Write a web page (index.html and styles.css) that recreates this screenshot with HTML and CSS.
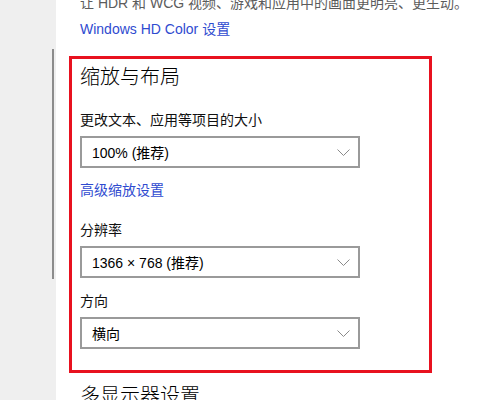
FILE: index.html
```html
<!DOCTYPE html>
<html lang="zh-CN">
<head>
<meta charset="utf-8">
<title>显示设置</title>
<link rel="stylesheet" href="styles.css">
</head>
<body>
<div class="page">
  <aside class="rail">
    <div class="scroll-thumb"></div>
  </aside>
  <main class="content">
    <p class="desc">让 HDR 和 WCG 视频、游戏和应用中的画面更明亮、更生动。</p>
    <a class="link top-link" href="#">Windows HD Color 设置</a>
    <section class="scale-box">
      <h2 class="heading">缩放与布局</h2>
      <div class="label first-label">更改文本、应用等项目的大小</div>
      <div class="select">
        <span>100% (推荐)</span>
        <svg class="chev" width="13" height="7" viewBox="0 0 13 7"><path d="M0.5 0.5 L6.5 6.5 L12.5 0.5" fill="none" stroke="#8a8a8a" stroke-width="1"/></svg>
      </div>
      <a class="link box-link" href="#">高级缩放设置</a>
      <div class="label">分辨率</div>
      <div class="select">
        <span>1366 × 768 (推荐)</span>
        <svg class="chev" width="13" height="7" viewBox="0 0 13 7"><path d="M0.5 0.5 L6.5 6.5 L12.5 0.5" fill="none" stroke="#8a8a8a" stroke-width="1"/></svg>
      </div>
      <div class="label after-select">方向</div>
      <div class="select">
        <span>横向</span>
        <svg class="chev" width="13" height="7" viewBox="0 0 13 7"><path d="M0.5 0.5 L6.5 6.5 L12.5 0.5" fill="none" stroke="#8a8a8a" stroke-width="1"/></svg>
      </div>
    </section>
    <h2 class="heading next-heading">多显示器设置</h2>
  </main>
</div>
</body>
</html>
```
FILE: styles.css
```css
html, body {
  margin: 0;
  padding: 0;
  background: #ffffff;
  overflow: hidden;
}
body {
  width: 500px;
  height: 400px;
  font-family: "Liberation Sans", "Noto Sans CJK SC", sans-serif;
  font-size: 14px;
  color: #000;
}
.page {
  display: flex;
  height: 400px;
}
.rail {
  width: 56px;
  flex: none;
  background: #efefef;
  display: flex;
  flex-direction: column;
  padding-top: 49px;
  box-sizing: border-box;
}
.scroll-thumb {
  margin-left: 52px;
  width: 2px;
  height: 230px;
  background: #8c8c8c;
}
.content {
  flex: 1;
  display: flex;
  flex-direction: column;
  align-items: flex-start;
  padding-left: 13px;
}
.desc {
  margin: -7px 0 0 11px;
  line-height: 20px;
  color: #5c5c5c;
  white-space: nowrap;
}
.link {
  color: #2f4bd0;
  text-decoration: none;
  line-height: 20px;
  display: block;
}
.top-link {
  margin: 6px 0 0 11px;
}
.scale-box {
  margin-top: 17px;
  width: 363px;
  box-sizing: border-box;
  border: 3px solid #e8111f;
  padding: 4px 8px 21px 8px;
  display: flex;
  flex-direction: column;
  align-items: flex-start;
}
.heading {
  margin: 0;
  font-size: 20px;
  font-weight: 300;
  line-height: 28px;
  color: #000;
}
.label {
  line-height: 20px;
  margin-top: 20px;
  color: #111;
}
.first-label {
  margin-top: 19px;
}
.after-select {
  margin-top: 13px;
}
.select {
  margin-top: 6px;
  width: 280px;
  height: 32px;
  box-sizing: border-box;
  border: 2px solid #9a9a9a;
  display: flex;
  align-items: center;
  justify-content: space-between;
  padding: 0 8px 0 10px;
  color: #000;
}
.chev {
  display: block;
}
.box-link {
  margin-top: 12px;
}
.next-heading {
  margin: 9px 0 0 11px;
}
```
